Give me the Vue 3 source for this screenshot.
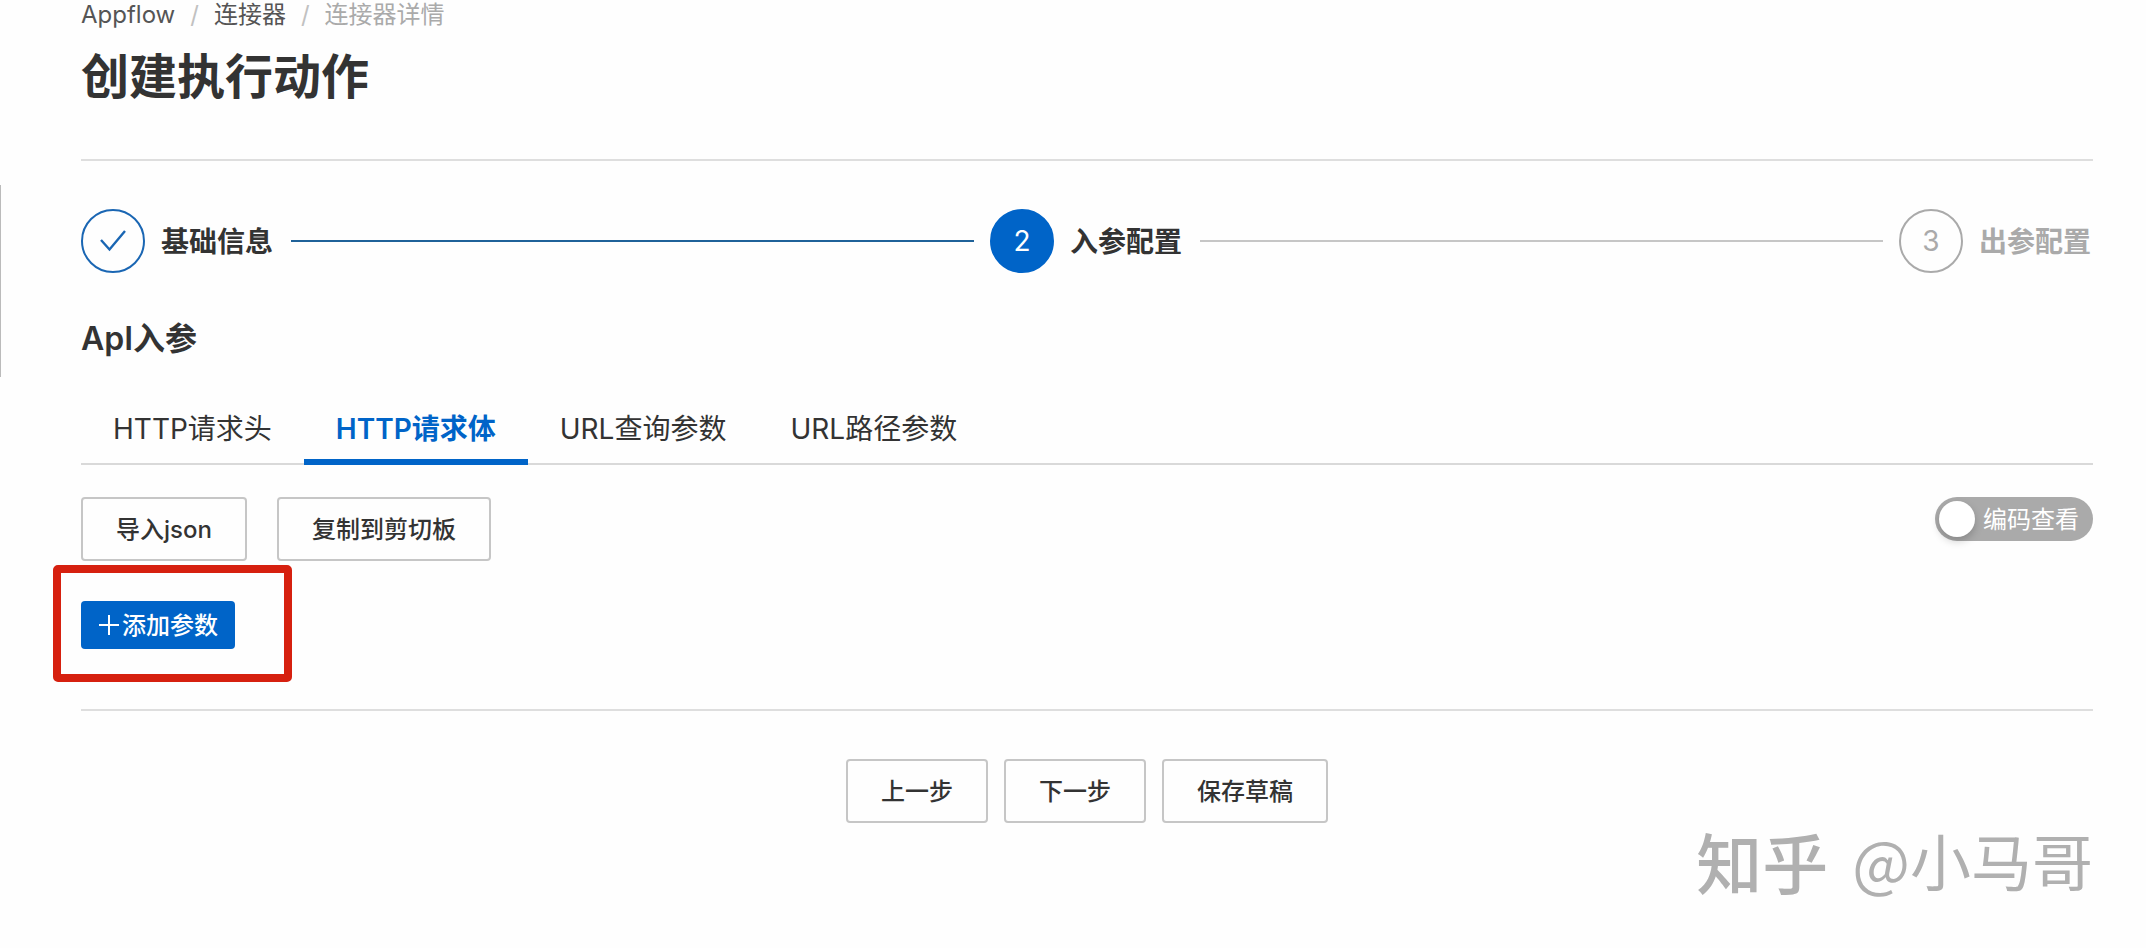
<script setup>
import { ref } from 'vue'

const steps = [
  { label: '基础信息', state: 'done' },
  { label: '入参配置', state: 'active' },
  { label: '出参配置', state: 'wait' },
]
const tabs = ['HTTP请求头', 'HTTP请求体', 'URL查询参数', 'URL路径参数']
const activeTab = ref(1)
const codeView = ref(false)
</script>

<template>
  <main class="page">
    <span class="side-handle" aria-hidden="true"></span>

    <header class="page-header">
      <nav class="breadcrumb" aria-label="breadcrumb">
        <a href="#">Appflow</a>
        <span class="slash">/</span>
        <a href="#">连接器</a>
        <span class="slash">/</span>
        <span class="current">连接器详情</span>
      </nav>
      <h1>创建执行动作</h1>
    </header>

    <ol class="steps">
      <li v-for="(step, i) in steps" :key="step.label" class="step" :class="step.state">
        <span class="dot">
          <svg v-if="step.state === 'done'" width="26" height="22" viewBox="0 0 26 22" aria-hidden="true">
            <path d="M1 10 L9.500 19.500 L25 1" fill="none" stroke="currentColor" stroke-width="2.400" />
          </svg>
          <template v-else>{{ i + 1 }}</template>
        </span>
        <span class="step-label">{{ step.label }}</span>
        <span v-if="i < steps.length - 1" class="rail"></span>
      </li>
    </ol>

    <h2>ApI入参</h2>

    <div class="tabs" role="tablist">
      <button
        v-for="(tab, i) in tabs"
        :key="tab"
        type="button"
        role="tab"
        class="tab"
        :class="{ selected: i === activeTab }"
        :aria-selected="i === activeTab"
        @click="activeTab = i"
      >{{ tab }}</button>
    </div>

    <div class="toolbar">
      <button type="button" class="btn">导入json</button>
      <button type="button" class="btn">复制到剪切板</button>
      <label class="switch">
        <input v-model="codeView" type="checkbox" role="switch" />
        <span class="knob"></span>
        <span class="switch-text">编码查看</span>
      </label>
    </div>

    <div class="add-row">
      <div class="add-wrap">
        <button type="button" class="add">
          <svg width="22" height="22" viewBox="0 0 22 22" aria-hidden="true">
            <path d="M11 1V21M1 11H21" stroke="currentColor" stroke-width="2" />
          </svg>
          <span class="add-text">添加参数</span>
        </button>
        <span class="highlight" aria-hidden="true"></span>
      </div>
    </div>

    <footer class="actions">
      <button type="button" class="btn">上一步</button>
      <button type="button" class="btn">下一步</button>
      <button type="button" class="btn">保存草稿</button>
    </footer>

    <p class="watermark"><span class="brand">知乎</span><span>@小马哥</span></p>
  </main>
</template>

<style>
body {
  background: #fefefe;
}
</style>

<style scoped>
.page {
  position: relative;
  padding: 0 53px 0 81px;
  font-family: Inter, "Noto Sans CJK SC", sans-serif;
  font-size: 24px;
  color: #333;
}
.side-handle {
  position: absolute;
  left: 0;
  top: 185px;
  width: 1px;
  height: 192px;
  background: #bbb;
}
button {
  font: inherit;
  color: inherit;
  cursor: pointer;
}
.page-header {
  border-bottom: 2px solid #dedede;
  padding-bottom: 46px;
}
.breadcrumb {
  display: flex;
  gap: 15px;
  height: 32px;
  line-height: 30px;
}
.breadcrumb a {
  color: #555;
  text-decoration: none;
}
.breadcrumb .slash {
  color: #c1c1c1;
}
.breadcrumb .current {
  color: #aaa;
}
h1 {
  margin: 9px 0 0;
  font-size: 48px;
  line-height: 72px;
  font-weight: 600;
}
.steps {
  display: flex;
  gap: 16px;
  margin: 48px 0 0;
  padding: 0;
  list-style: none;
}
.step {
  display: flex;
  align-items: center;
  gap: 16px;
  flex: 1 1 0;
  font-size: 28px;
}
.step:last-child {
  flex: none;
}
.dot {
  box-sizing: border-box;
  width: 64px;
  height: 64px;
  border: 2px solid #aaa;
  border-radius: 50%;
  display: flex;
  align-items: center;
  justify-content: center;
  color: #aaa;
}
.done .dot {
  border-color: #1a66b3;
  color: #1a66b3;
}
.active .dot {
  border-color: #0064c8;
  background: #0064c8;
  color: #fff;
}
.step-label {
  padding: 0 2px 2px 0;
  font-weight: 600;
}
.wait .step-label {
  color: #aaa;
}
.rail {
  flex: 1;
  height: 2px;
  background: #c6c6c6;
}
.done .rail {
  background: #1f6299;
}
h2 {
  margin: 42px 0 0;
  font-size: 32px;
  line-height: 48px;
  font-weight: 600;
}
.tabs {
  display: flex;
  margin-top: 30px;
  box-shadow: inset 0 -2px #d9d9d9;
}
.tab {
  padding: 2px 32px 0;
  height: 72px;
  border: 0;
  border-bottom: 6px solid transparent;
  background: none;
  font-size: 28px;
}
.tab.selected {
  border-color: #0064c8;
  color: #0064c8;
  font-weight: 600;
}
.toolbar {
  display: flex;
  align-items: flex-start;
  gap: 30px;
  margin-top: 32px;
}
.btn {
  height: 64px;
  padding: 0 33px 4px;
  border: 2px solid #c6c6c6;
  border-radius: 4px;
  background: #fefefe;
  font-weight: 500;
}
.switch {
  box-sizing: border-box;
  display: flex;
  align-items: center;
  gap: 8px;
  height: 44px;
  margin-left: auto;
  padding: 0 14px 0 4px;
  border-radius: 22px;
  background: #aaa;
  color: #fff;
  cursor: pointer;
}
.switch input {
  position: absolute;
  opacity: 0;
}
.switch-text,
.add-text {
  padding-bottom: 4px;
}
.knob {
  width: 36px;
  height: 36px;
  border-radius: 50%;
  background: #fff;
  box-shadow: 0 4px 8px rgba(0, 0, 0, 0.2);
}
.add-row {
  display: flex;
  padding: 40px 0 60px;
  border-bottom: 2px solid #dedede;
}
.add-wrap {
  position: relative;
}
.add {
  display: flex;
  align-items: center;
  gap: 2px;
  height: 48px;
  padding: 0 17px;
  border: 0;
  border-radius: 4px;
  background: #0064c8;
  color: #fff;
  font-weight: 500;
}
.highlight {
  position: absolute;
  inset: -36px -57px -33px -28px;
  border: 8px solid #d6200f;
  border-radius: 5px;
  pointer-events: none;
}
.actions {
  display: flex;
  justify-content: center;
  gap: 16px;
  padding-top: 48px;
}
.watermark {
  display: flex;
  align-items: center;
  justify-content: flex-end;
  gap: 24px;
  margin: 0;
  font-family: "Noto Sans CJK SC", sans-serif;
  font-size: 61px;
  line-height: 74px;
  color: #b0b0b0;
}
.brand {
  font-size: 66px;
  font-weight: 500;
}
</style>
